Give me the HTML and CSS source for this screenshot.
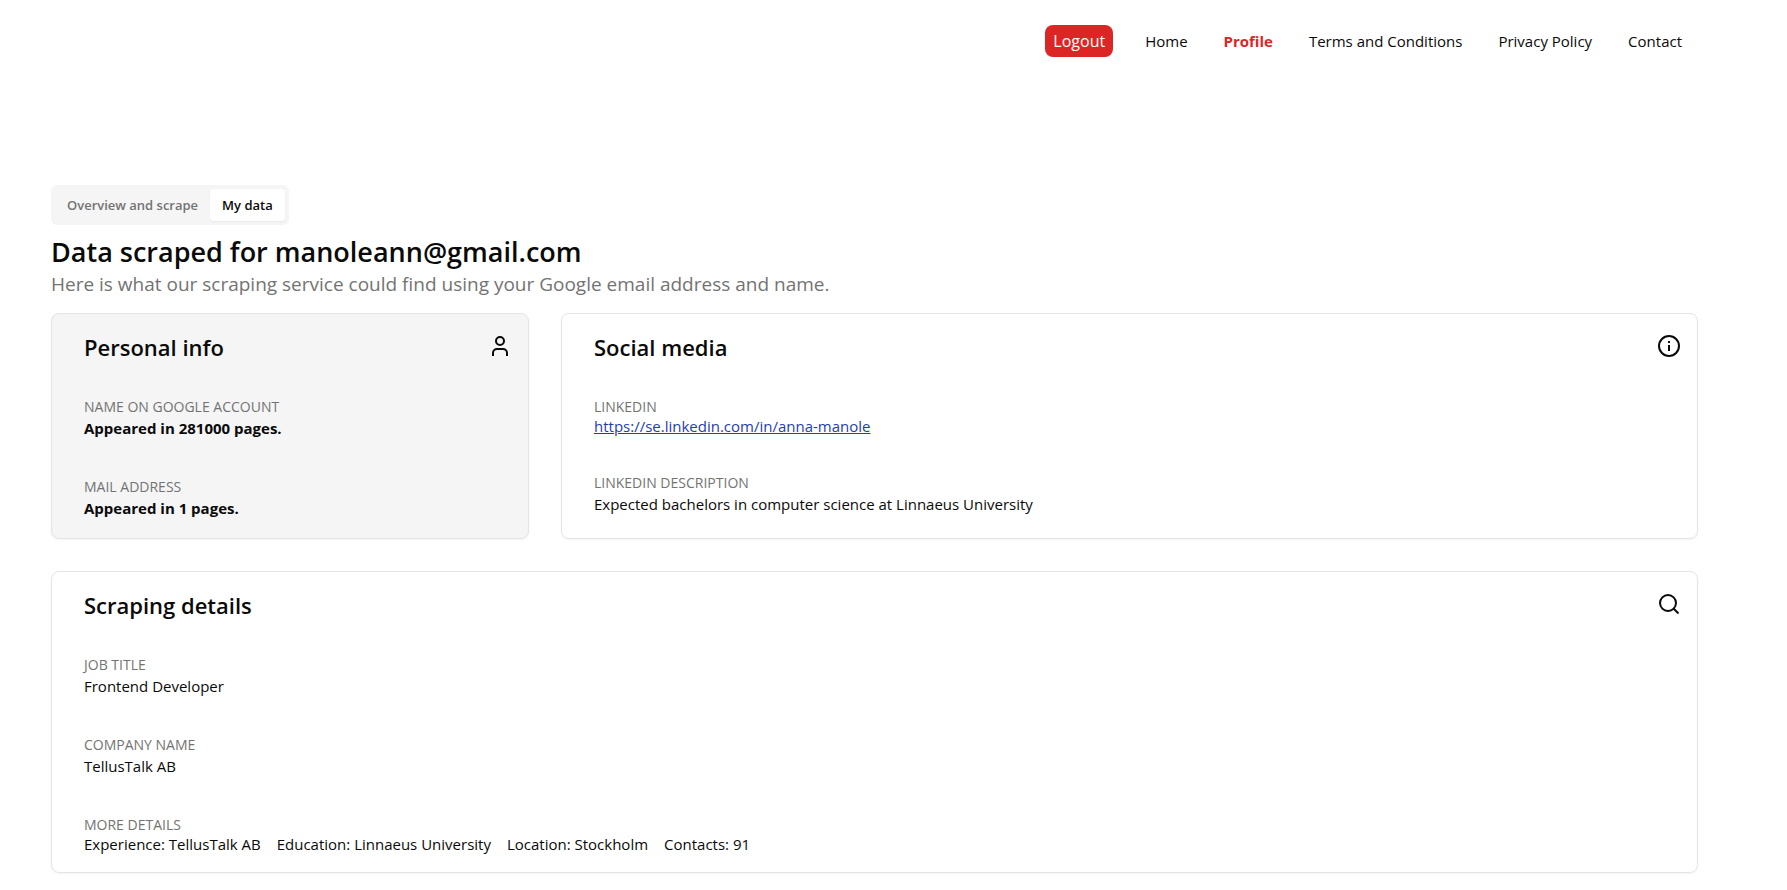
FILE: index.html
```html
<!DOCTYPE html>
<html lang="en">
<head>
<meta charset="utf-8">
<title>Profile</title>
<meta name="viewport" content="width=device-width, initial-scale=1">
<link rel="stylesheet" href="styles.css">
</head>
<body>
<header class="site-header">
  <button type="button" class="logout">Logout</button>
  <nav class="site-nav">
    <a href="#home">Home</a>
    <a href="#profile" class="active">Profile</a>
    <a href="#terms">Terms and Conditions</a>
    <a href="#privacy">Privacy Policy</a>
    <a href="#contact">Contact</a>
  </nav>
</header>
<main class="page">
  <div class="tabs" role="tablist">
    <button type="button" class="tab" role="tab" aria-selected="false">Overview and scrape</button>
    <button type="button" class="tab selected" role="tab" aria-selected="true">My data</button>
  </div>
  <h1 class="title">Data scraped for manoleann@gmail.com</h1>
  <p class="subtitle">Here is what our scraping service could find using your Google email address and name.</p>
  <div class="cards">
    <section class="card muted">
      <div class="card-head">
        <h2>Personal info</h2>
        <svg class="icon" viewBox="0 0 24 24" aria-hidden="true"><circle cx="12" cy="7" r="4"/><path d="M5 22v-3a4 4 0 0 1 4-4h6a4 4 0 0 1 4 4v3"/></svg>
      </div>
      <dl class="fields">
        <div><dt>NAME ON GOOGLE ACCOUNT</dt><dd class="strong">Appeared in 281000 pages.</dd></div>
        <div><dt>MAIL ADDRESS</dt><dd class="strong">Appeared in 1 pages.</dd></div>
      </dl>
    </section>
    <section class="card">
      <div class="card-head">
        <h2>Social media</h2>
        <svg class="icon" viewBox="0 0 24 24" aria-hidden="true"><circle cx="12" cy="12" r="10"/><path d="M12 11v6M12 7v2"/></svg>
      </div>
      <dl class="fields">
        <div><dt>LINKEDIN</dt><dd class="compact"><a class="link" href="#linkedin">https://se.linkedin.com/in/anna-manole</a></dd></div>
        <div><dt>LINKEDIN DESCRIPTION</dt><dd>Expected bachelors in computer science at Linnaeus University</dd></div>
      </dl>
    </section>
    <section class="card wide">
      <div class="card-head">
        <h2>Scraping details</h2>
        <svg class="icon" viewBox="0 0 24 24" aria-hidden="true"><circle cx="11" cy="11" r="8"/><path d="M16.500 16.500l5 5"/></svg>
      </div>
      <dl class="fields">
        <div><dt>JOB TITLE</dt><dd>Frontend Developer</dd></div>
        <div><dt>COMPANY NAME</dt><dd>TellusTalk AB</dd></div>
        <div><dt>MORE DETAILS</dt><dd class="compact details"><span>Experience: TellusTalk AB</span><span>Education: Linnaeus University</span><span>Location: Stockholm</span><span>Contacts: 91</span></dd></div>
      </dl>
    </section>
  </div>
</main>
</body>
</html>
```
FILE: styles.css
```css
* { box-sizing: border-box; }
body {
  margin: 0;
  background: #fff;
  color: #0a0a0a;
  font-family: "Segoe UI", "Open Sans", "Noto Sans", sans-serif;
  font-size: 15px;
  line-height: 24px;
}
h1, h2, p, dl, dd { margin: 0; }
button { font: inherit; border: 0; cursor: pointer; }
.site-header {
  display: flex;
  justify-content: flex-end;
  align-items: center;
  gap: 32px;
  padding: 25px 105px 0 32px;
}
.logout {
  height: 32px;
  padding: 0 8px;
  border-radius: 8px;
  background: #dc2626;
  color: #fff;
  font-size: 16px;
}
.site-nav { display: flex; gap: 36px; }
.site-nav a { color: inherit; text-decoration: none; }
.site-nav .active { color: #dc2626; font-weight: 700; }
.page { padding: 128px 89px 16px 51px; }
.tabs {
  display: flex;
  width: fit-content;
  padding: 4px;
  border-radius: 6px;
  background: #f5f5f5;
}
.tab {
  height: 32px;
  padding: 0 12px;
  border-radius: 4px;
  background: transparent;
  color: #737373;
  font-size: 13px;
  font-weight: 600;
}
.tab.selected {
  background: #fff;
  color: #0a0a0a;
  box-shadow: 0 1px 2px rgba(0, 0, 0, 0.05);
}
.title {
  margin-top: 9px;
  font-size: 27px;
  line-height: 36px;
  font-weight: 600;
}
.subtitle {
  color: #737373;
  font-size: 19px;
  line-height: 28px;
}
.cards {
  display: grid;
  grid-template-columns: 478fr 1137fr;
  gap: 32px;
  margin-top: 15px;
}
.card {
  padding: 20px 16px 17px 32px;
  border: 1px solid #e5e5e5;
  border-radius: 8px;
  box-shadow: 0 1px 2px rgba(0, 0, 0, 0.05);
}
.card.muted { background: #f5f5f5; }
.card.wide { grid-column: 1 / -1; }
.card-head { display: flex; justify-content: space-between; }
.card h2 {
  font-size: 22px;
  line-height: 26px;
  font-weight: 600;
}
.icon {
  width: 24px;
  height: 24px;
  fill: none;
  stroke: #0a0a0a;
  stroke-width: 2;
}
.fields {
  display: flex;
  flex-direction: column;
  gap: 36px;
  margin-top: 37px;
}
.fields dt {
  color: #737373;
  font-size: 14px;
  line-height: 20px;
}
.fields dd {
  padding-bottom: 2px;
  line-height: 22px;
}
.fields .compact { line-height: 18px; }
.strong { font-weight: 700; }
.details { display: flex; flex-wrap: wrap; gap: 0 16px; }
.link { color: #1e40af; text-decoration: underline; }
```
